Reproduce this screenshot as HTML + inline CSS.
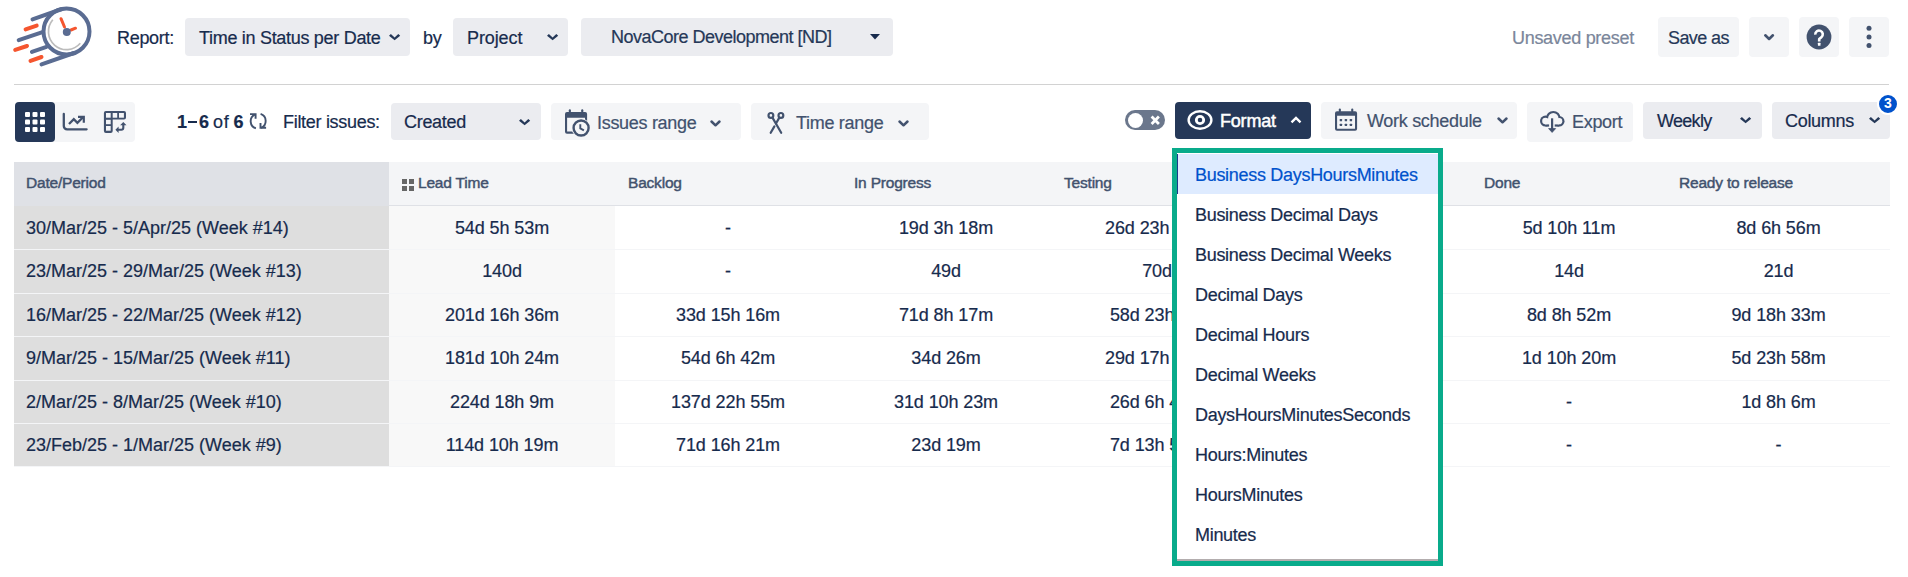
<!DOCTYPE html>
<html><head><meta charset="utf-8">
<style>
*{box-sizing:border-box;margin:0;padding:0}
html,body{width:1908px;height:577px;overflow:hidden;background:#fff}
body{font-family:"Liberation Sans",sans-serif;color:#253858;position:relative}
.a{position:absolute}
.t{position:absolute;white-space:nowrap;font-size:18px;letter-spacing:-0.3px;line-height:20px;-webkit-text-stroke:0.2px currentColor}
.btn{position:absolute;border-radius:4px;background:#f4f5f7}
.dd{position:absolute;border-radius:4px;background:#ebecf0}
svg{position:absolute;overflow:visible}
.hd{position:absolute;top:162px;height:43px;background:#f4f5f7}
.ht{position:absolute;top:174.6px;font-size:15.5px;letter-spacing:-0.2px;font-weight:normal;-webkit-text-stroke:0.45px #42526e;color:#42526e;line-height:16px;white-space:nowrap}
.c{position:absolute;text-align:center;font-size:18px;letter-spacing:-0.1px;line-height:20px;color:#172b4d;white-space:nowrap;-webkit-text-stroke:0.2px currentColor}
.mi{position:absolute;left:1195px;font-size:18px;letter-spacing:-0.3px;line-height:20px;color:#172b4d;white-space:nowrap;-webkit-text-stroke:0.2px currentColor}
</style></head>
<body>
<!-- logo -->
<svg width="100" height="80" style="left:0;top:0" viewBox="0 0 100 80">
  <g stroke="#5a6c92" stroke-width="4" stroke-linecap="round" fill="none">
    <circle cx="66.5" cy="31.5" r="23"/>
    <line x1="32.5" y1="19.4" x2="62" y2="9"/>
    <line x1="41.5" y1="64.4" x2="74" y2="53"/>
    <line x1="18.7" y1="40.2" x2="42.5" y2="32.1"/>
    <line x1="31.9" y1="51.9" x2="46.5" y2="46.8"/>
  </g>
  <g stroke="#f5562f" stroke-width="4" stroke-linecap="round" fill="none">
    <line x1="25.6" y1="29.4" x2="36.7" y2="25.6"/>
    <line x1="15.2" y1="49.9" x2="27" y2="46"/>
    <line x1="30.5" y1="60.9" x2="41.5" y2="57"/>
    <line x1="61" y1="18.7" x2="64.5" y2="27" stroke-width="3"/>
    <line x1="71" y1="30" x2="75.5" y2="28.2" stroke-width="3"/>
  </g>
  <path d="M52.8 19.8 A17.9 17.9 0 1 0 80.3 43.3" stroke="#bcbcbc" stroke-width="1.7" fill="none"/>
  <circle cx="66.8" cy="32" r="4" fill="#5a6c92"/>
</svg>

<div class="t" style="left:117px;top:28px;color:#172b4d">Report:</div>
<div class="dd" style="left:185px;top:18px;width:225px;height:38px"></div>
<div class="t" style="left:199px;top:28px;color:#172b4d">Time in Status per Date</div>
<svg style="left:388.9px;top:33.8px" width="12" height="7" viewBox="0 0 12 7"><path d="M0 1.8 L1.9 0 L5.6 3.4 L9.3 0 L11.2 1.8 L5.6 6.2 Z" fill="#253858"/></svg>
<div class="t" style="left:423px;top:28px;color:#172b4d">by</div>
<div class="dd" style="left:453px;top:18px;width:115px;height:38px"></div>
<div class="t" style="left:467px;top:28px;letter-spacing:-0.1px;color:#172b4d">Project</div>
<svg style="left:546.9px;top:33.8px" width="12" height="7" viewBox="0 0 12 7"><path d="M0 1.8 L1.9 0 L5.6 3.4 L9.3 0 L11.2 1.8 L5.6 6.2 Z" fill="#253858"/></svg>
<div class="dd" style="left:581px;top:18px;width:312px;height:38px"></div>
<div class="t" style="left:611px;top:27px;letter-spacing:-0.5px">NovaCore Development [ND]</div>
<svg style="left:870px;top:34px" width="10" height="6"><path d="M0 0 L10 0 L5 5.5 Z" fill="#172b4d"/></svg>

<div class="t" style="left:1512px;top:28px;color:#7a869a">Unsaved preset</div>
<div class="btn" style="left:1658px;top:17px;width:81px;height:40px"></div>
<div class="t" style="left:1668px;top:28px;color:#253858;letter-spacing:-0.6px">Save as</div>
<div class="btn" style="left:1749px;top:17px;width:40px;height:40px"></div>
<svg style="left:1764px;top:34px" width="11" height="7"><path d="M1.3 1.3 L5.1 5 L8.9 1.3" stroke="#42526e" stroke-width="2.6" stroke-linecap="round" stroke-linejoin="round" fill="none"/></svg>
<div class="btn" style="left:1799px;top:17px;width:40px;height:40px"></div>
<svg style="left:1806px;top:24px" width="26" height="26" viewBox="0 0 26 26"><circle cx="13" cy="13" r="12.4" fill="#42526e"/><path d="M9.3 10.6 A3.75 3.75 0 1 1 15.36 13.22 L13.2 15 V17.6" stroke="#fff" stroke-width="2.6" fill="none" stroke-linejoin="round"/><rect x="11.9" y="18.8" width="2.6" height="2.9" rx="0.5" fill="#fff"/></svg>
<div class="btn" style="left:1849px;top:17px;width:40px;height:40px"></div>
<svg style="left:1864px;top:25px" width="10" height="24"><circle cx="5" cy="3.3" r="2.5" fill="#42526e"/><circle cx="5" cy="12" r="2.5" fill="#42526e"/><circle cx="5" cy="20.6" r="2.5" fill="#42526e"/></svg>

<div class="a" style="left:14px;top:84px;width:1875px;height:1px;background:#d2d2d2"></div>

<!-- second row -->
<div class="btn" style="left:15px;top:102px;width:120px;height:40px"></div>
<div class="a" style="left:15px;top:102px;width:40px;height:40px;border-radius:4px;background:#253858"></div>
<svg style="left:25px;top:112px" width="20" height="20"><g fill="#fff">
<rect x="0" y="0" width="5" height="5" rx="1"/><rect x="7.5" y="0" width="5" height="5" rx="1"/><rect x="15" y="0" width="5" height="5" rx="1"/>
<rect x="0" y="7.5" width="5" height="5" rx="1"/><rect x="7.5" y="7.5" width="5" height="5" rx="1"/><rect x="15" y="7.5" width="5" height="5" rx="1"/>
<rect x="0" y="15" width="5" height="5" rx="1"/><rect x="7.5" y="15" width="5" height="5" rx="1"/><rect x="15" y="15" width="5" height="5" rx="1"/></g></svg>
<svg style="left:60px;top:106px" width="30" height="30" viewBox="0 0 30 30"><g stroke="#42526e" fill="none"><path d="M3.8 8 V20 A3.3 3.3 0 0 0 7.1 23.3 H26.6" stroke-width="2.3" stroke-linecap="round"/><path d="M9 18 L13.8 13.2 L17.4 16.8 L23 11.2" stroke-width="2.3"/><path d="M18 10.8 H23.8 V16.8" stroke-width="2.2"/></g></svg>
<svg style="left:100px;top:106px" width="30" height="30" viewBox="0 0 30 30"><path d="M5.9 4.9 H24 A2 2 0 0 1 26 6.9 V11.5 A2 2 0 0 1 24 13.5 H12.7 V25 A2 2 0 0 1 10.7 27 H5.9 A2 2 0 0 1 3.9 25 V6.9 A2 2 0 0 1 5.9 4.9 Z" fill="#42526e"/><g fill="#f4f5f7"><rect x="6" y="7" width="4.7" height="4.7"/><rect x="12.7" y="7" width="4.5" height="4.7"/><rect x="19" y="7" width="4.9" height="4.7"/><rect x="6" y="13.8" width="4.7" height="4.4"/><rect x="6" y="20" width="4.7" height="4.7"/></g><path d="M17.5 23.8 H21.3 A2 2 0 0 0 23.3 21.8 V18.5" stroke="#42526e" stroke-width="2.1" fill="none"/><path d="M15.4 23.8 L18.6 20.6 L18.6 27 Z M23.3 16.1 L20.1 19.3 L26.5 19.3 Z" fill="#42526e"/></svg>

<div class="t" style="left:177px;top:112px;color:#172b4d;font-weight:bold">1</div><div class="a" style="left:188px;top:121px;width:9px;height:1.6px;background:#172b4d"></div><div class="t" style="left:199px;top:112px;color:#172b4d;font-weight:bold">6</div><div class="t" style="left:213px;top:112px;color:#172b4d;letter-spacing:0.8px">of</div><div class="t" style="left:233.5px;top:112px;color:#172b4d;font-weight:bold">6</div>
<svg style="left:244px;top:108px" width="28" height="26" viewBox="0 0 28 26"><g stroke="#42526e" stroke-width="1.9" fill="none"><path d="M10.8 6.6 A7.4 7.4 0 0 0 11.9 20.3"/><path d="M6 6.1 H11.6 V10.8"/><path d="M16.6 5.9 A7.4 7.4 0 0 1 17 19.8"/><path d="M22.1 19.8 H16.5 V15.1"/></g></svg>
<div class="t" style="left:283px;top:112px;color:#172b4d">Filter issues:</div>
<div class="dd" style="left:391px;top:103px;width:150px;height:37px"></div>
<div class="t" style="left:404px;top:112px;color:#172b4d">Created</div>
<svg style="left:519.2px;top:118.8px" width="12" height="7" viewBox="0 0 12 7"><path d="M0 1.8 L1.9 0 L5.6 3.4 L9.3 0 L11.2 1.8 L5.6 6.2 Z" fill="#253858"/></svg>

<div class="btn" style="left:551px;top:103px;width:190px;height:37px"></div>
<svg style="left:560px;top:106px" width="34" height="34" viewBox="0 0 34 34"><g fill="#42526e"><rect x="8.8" y="3.2" width="2.1" height="3.6" rx="1"/><rect x="21.2" y="3.2" width="2.1" height="3.6" rx="1"/><path fill-rule="evenodd" d="M7 5.9 H25.1 A2 2 0 0 1 27.1 7.9 V25.7 A2 2 0 0 1 25.1 27.7 H7 A2 2 0 0 1 5 25.7 V7.9 A2 2 0 0 1 7 5.9 Z M7.1 11.8 V25.6 H25 V11.8 Z"/></g><circle cx="21.1" cy="22" r="9.4" fill="#f4f5f7"/><circle cx="21.1" cy="22" r="7.5" fill="#f4f5f7" stroke="#42526e" stroke-width="2.4"/><path d="M20.3 18.3 V22.4 L23.9 24.4" stroke="#42526e" stroke-width="1.9" fill="none"/></svg>
<div class="t" style="left:597px;top:113px;color:#42526e">Issues range</div>
<svg style="left:710px;top:120px" width="12" height="8"><path d="M1.5 1.5 L5.5 5.3 L9.5 1.5" stroke="#42526e" stroke-width="2.5" stroke-linecap="round" stroke-linejoin="round" fill="none"/></svg>

<div class="btn" style="left:751px;top:103px;width:178px;height:37px"></div>
<svg style="left:760px;top:106px" width="34" height="34" viewBox="0 0 34 34"><g stroke="#42526e" stroke-width="2.2" fill="none" stroke-linecap="round"><circle cx="10.9" cy="9.4" r="2.4"/><circle cx="20.9" cy="9.4" r="2.4"/><path d="M12.6 11.9 L21.2 26.8"/><path d="M19.2 11.9 L16.1 17.3"/><path d="M14.4 20.4 L10.7 26.8"/></g></svg>
<div class="t" style="left:796px;top:113px;color:#42526e">Time range</div>
<svg style="left:898px;top:120px" width="12" height="8"><path d="M1.5 1.5 L5.5 5.3 L9.5 1.5" stroke="#42526e" stroke-width="2.5" stroke-linecap="round" stroke-linejoin="round" fill="none"/></svg>

<!-- toggle -->
<div class="a" style="left:1125px;top:110px;width:40px;height:20px;border-radius:10px;background:#6b778c"></div>
<div class="a" style="left:1128px;top:112.5px;width:15px;height:15px;border-radius:50%;background:#fff"></div>
<svg style="left:1149.5px;top:114.5px" width="11" height="11"><path d="M1.6 1.6 L8.9 8.9 M8.9 1.6 L1.6 8.9" stroke="#fff" stroke-width="2.8"/></svg>

<div class="a" style="left:1175px;top:102px;width:136px;height:37px;border-radius:4px;background:#253858"></div>
<svg style="left:1183px;top:103px" width="34" height="34" viewBox="0 0 34 34"><ellipse cx="17" cy="17" rx="11.4" ry="8.7" stroke="#fff" stroke-width="2.4" fill="none"/><circle cx="17" cy="17" r="3.7" stroke="#fff" stroke-width="2.8" fill="none"/></svg>
<div class="t" style="left:1220px;top:111px;color:#fff;font-size:18px;letter-spacing:-0.2px;-webkit-text-stroke:0.5px #fff">Format</div>
<svg style="left:1290px;top:116px" width="12" height="8"><path d="M1.5 6.3 L6 2 L10.5 6.3" stroke="#fff" stroke-width="2.4" fill="none"/></svg>

<div class="btn" style="left:1321px;top:102px;width:196px;height:37px"></div>
<svg style="left:1330px;top:103px" width="34" height="34" viewBox="0 0 34 34"><g fill="#42526e"><rect x="8.8" y="5.4" width="2.1" height="3.8" rx="1"/><rect x="21.2" y="5.4" width="2.1" height="3.8" rx="1"/><path fill-rule="evenodd" d="M7 8.2 H25.1 A2 2 0 0 1 27.1 10.2 V25.7 A2 2 0 0 1 25.1 27.7 H7 A2 2 0 0 1 5 25.7 V10.2 A2 2 0 0 1 7 8.2 Z M7.1 12.7 V25.8 H25 V12.7 Z"/><rect x="9.7" y="15.9" width="2.4" height="2.4" rx="0.5"/><rect x="14.7" y="15.9" width="2.4" height="2.4" rx="0.5"/><rect x="19.7" y="15.9" width="2.4" height="2.4" rx="0.5"/><rect x="9.7" y="20.7" width="2.4" height="2.4" rx="0.5"/><rect x="14.7" y="20.7" width="2.4" height="2.4" rx="0.5"/><rect x="19.7" y="20.7" width="2.4" height="2.4" rx="0.5"/></g></svg>
<div class="t" style="left:1367px;top:111px;color:#42526e">Work schedule</div>
<svg style="left:1496.5px;top:117px" width="12" height="8"><path d="M1.5 1.5 L5.5 5.3 L9.5 1.5" stroke="#42526e" stroke-width="2.5" stroke-linecap="round" stroke-linejoin="round" fill="none"/></svg>

<div class="btn" style="left:1527px;top:102px;width:106px;height:40px"></div>
<svg style="left:1535px;top:105px" width="34" height="34" viewBox="0 0 34 34"><g fill="#42526e"><circle cx="10.5" cy="16.1" r="5.5"/><circle cx="18.3" cy="13.3" r="7.4"/><circle cx="24.2" cy="16.2" r="5.3"/><rect x="10.5" y="15" width="13.7" height="6.6"/></g><g fill="#f4f5f7"><circle cx="10.5" cy="16.1" r="3.3"/><circle cx="18.3" cy="13.3" r="5.2"/><circle cx="24.2" cy="16.2" r="3.1"/><rect x="10.5" y="14" width="13.7" height="5.4"/><rect x="14.1" y="18" width="5.6" height="4.5"/></g><path d="M17.1 13.3 V24" stroke="#42526e" stroke-width="2.2"/><path d="M13.6 23.6 H20.6 L17.1 27.4 Z" fill="#42526e" stroke="#42526e" stroke-width="0.8" stroke-linejoin="round"/></svg>
<div class="t" style="left:1572px;top:112px;color:#42526e">Export</div>

<div class="dd" style="left:1643px;top:102px;width:119px;height:37px"></div>
<div class="t" style="left:1657px;top:111px;letter-spacing:-0.7px;color:#172b4d">Weekly</div>
<svg style="left:1740px;top:116.8px" width="12" height="7" viewBox="0 0 12 7"><path d="M0 1.8 L1.9 0 L5.6 3.4 L9.3 0 L11.2 1.8 L5.6 6.2 Z" fill="#253858"/></svg>

<div class="dd" style="left:1772px;top:102px;width:118px;height:37px"></div>
<div class="t" style="left:1785px;top:111px;color:#172b4d">Columns</div>
<svg style="left:1869px;top:116.9px" width="12" height="7" viewBox="0 0 12 7"><path d="M0 1.8 L1.9 0 L5.6 3.4 L9.3 0 L11.2 1.8 L5.6 6.2 Z" fill="#253858"/></svg>
<div class="a" style="left:1876.6px;top:92.8px;width:22.5px;height:22.5px;border-radius:50%;background:#0052cc;border:2px solid #fff;color:#fff;font-size:14px;font-weight:bold;text-align:center;line-height:17.5px">3</div>

<!-- table header -->
<div class="hd" style="left:14px;width:375px;background:#dfe1e6"></div>
<div class="hd" style="left:389px;width:1501px"></div>
<div class="a" style="left:14px;top:205px;width:1876px;height:1px;background:#dfe1e6"></div>
<div class="ht" style="left:26px">Date/Period</div>
<svg style="left:402px;top:178.6px" width="12" height="12"><g fill="#666"><rect x="0" y="0" width="5" height="5"/><rect x="7" y="0" width="5" height="5"/><rect x="0" y="7" width="5" height="5"/><rect x="7" y="7" width="5" height="5"/></g></svg>
<div class="ht" style="left:418px">Lead Time</div>
<div class="ht" style="left:628px">Backlog</div>
<div class="ht" style="left:854px">In Progress</div>
<div class="ht" style="left:1064px">Testing</div>
<div class="ht" style="left:1484px">Done</div>
<div class="ht" style="left:1679px">Ready to release</div>

<!--ROWS-->
<div class="a" style="left:14px;top:206px;width:375px;height:260px;background:#dedede"></div>
<div class="a" style="left:389px;top:206px;width:226px;height:260px;background:#f8f8f8"></div>
<div class="a" style="left:14px;top:249px;width:1876px;height:1px;background:#f4f5f7"></div>
<div class="a" style="left:14px;top:293px;width:1876px;height:1px;background:#f4f5f7"></div>
<div class="a" style="left:14px;top:336px;width:1876px;height:1px;background:#f4f5f7"></div>
<div class="a" style="left:14px;top:380px;width:1876px;height:1px;background:#f4f5f7"></div>
<div class="a" style="left:14px;top:423px;width:1876px;height:1px;background:#f4f5f7"></div>
<div class="a" style="left:14px;top:466px;width:1876px;height:1px;background:#f4f5f7"></div>
<div class="c" style="left:26px;top:218.0px;text-align:left;letter-spacing:0">30/Mar/25 - 5/Apr/25 (Week #14)</div>
<div class="c" style="left:389px;top:218.0px;width:226px">54d 5h 53m</div>
<div class="c" style="left:615px;top:218.0px;width:226px">-</div>
<div class="c" style="left:841px;top:218.0px;width:210px">19d 3h 18m</div>
<div class="c" style="left:1051px;top:218.0px;width:212px">26d 23h 41m</div>
<div class="c" style="left:1263px;top:218.0px;width:208px">12d 4h 10m</div>
<div class="c" style="left:1471px;top:218.0px;width:196px">5d 10h 11m</div>
<div class="c" style="left:1667px;top:218.0px;width:223px">8d 6h 56m</div>
<div class="c" style="left:26px;top:261.4px;text-align:left;letter-spacing:0">23/Mar/25 - 29/Mar/25 (Week #13)</div>
<div class="c" style="left:389px;top:261.4px;width:226px">140d</div>
<div class="c" style="left:615px;top:261.4px;width:226px">-</div>
<div class="c" style="left:841px;top:261.4px;width:210px">49d</div>
<div class="c" style="left:1051px;top:261.4px;width:212px">70d</div>
<div class="c" style="left:1263px;top:261.4px;width:208px">28d</div>
<div class="c" style="left:1471px;top:261.4px;width:196px">14d</div>
<div class="c" style="left:1667px;top:261.4px;width:223px">21d</div>
<div class="c" style="left:26px;top:304.8px;text-align:left;letter-spacing:0">16/Mar/25 - 22/Mar/25 (Week #12)</div>
<div class="c" style="left:389px;top:304.8px;width:226px">201d 16h 36m</div>
<div class="c" style="left:615px;top:304.8px;width:226px">33d 15h 16m</div>
<div class="c" style="left:841px;top:304.8px;width:210px">71d 8h 17m</div>
<div class="c" style="left:1051px;top:304.8px;width:212px">58d 23h 7m</div>
<div class="c" style="left:1263px;top:304.8px;width:208px">20d 9h 31m</div>
<div class="c" style="left:1471px;top:304.8px;width:196px">8d 8h 52m</div>
<div class="c" style="left:1667px;top:304.8px;width:223px">9d 18h 33m</div>
<div class="c" style="left:26px;top:348.2px;text-align:left;letter-spacing:0">9/Mar/25 - 15/Mar/25 (Week #11)</div>
<div class="c" style="left:389px;top:348.2px;width:226px">181d 10h 24m</div>
<div class="c" style="left:615px;top:348.2px;width:226px">54d 6h 42m</div>
<div class="c" style="left:841px;top:348.2px;width:210px">34d 26m</div>
<div class="c" style="left:1051px;top:348.2px;width:212px">29d 17h 46m</div>
<div class="c" style="left:1263px;top:348.2px;width:208px">11d 2h 5m</div>
<div class="c" style="left:1471px;top:348.2px;width:196px">1d 10h 20m</div>
<div class="c" style="left:1667px;top:348.2px;width:223px">5d 23h 58m</div>
<div class="c" style="left:26px;top:391.6px;text-align:left;letter-spacing:0">2/Mar/25 - 8/Mar/25 (Week #10)</div>
<div class="c" style="left:389px;top:391.6px;width:226px">224d 18h 9m</div>
<div class="c" style="left:615px;top:391.6px;width:226px">137d 22h 55m</div>
<div class="c" style="left:841px;top:391.6px;width:210px">31d 10h 23m</div>
<div class="c" style="left:1051px;top:391.6px;width:212px">26d 6h 41m</div>
<div class="c" style="left:1263px;top:391.6px;width:208px">14d 5h 2m</div>
<div class="c" style="left:1471px;top:391.6px;width:196px">-</div>
<div class="c" style="left:1667px;top:391.6px;width:223px">1d 8h 6m</div>
<div class="c" style="left:26px;top:435.0px;text-align:left;letter-spacing:0">23/Feb/25 - 1/Mar/25 (Week #9)</div>
<div class="c" style="left:389px;top:435.0px;width:226px">114d 10h 19m</div>
<div class="c" style="left:615px;top:435.0px;width:226px">71d 16h 21m</div>
<div class="c" style="left:841px;top:435.0px;width:210px">23d 19m</div>
<div class="c" style="left:1051px;top:435.0px;width:212px">7d 13h 51m</div>
<div class="c" style="left:1263px;top:435.0px;width:208px">9d 2h 8m</div>
<div class="c" style="left:1471px;top:435.0px;width:196px">-</div>
<div class="c" style="left:1667px;top:435.0px;width:223px">-</div>
<!--/ROWS-->

<!-- dropdown menu -->
<div class="a" style="left:1172px;top:148px;width:271px;height:418px;background:#09ab8b"></div>
<div class="a" style="left:1177px;top:153px;width:261px;height:408px;background:#fff"></div>
<div class="a" style="left:1177px;top:559px;width:261px;height:2px;background:#b3adae"></div>
<div class="a" style="left:1177px;top:154px;width:261px;height:40px;background:#deebff;border-left:1.5px solid #1d3a8a"></div>
<div class="mi" style="top:165px;color:#0052cc">Business DaysHoursMinutes</div>
<div class="mi" style="top:205px">Business Decimal Days</div>
<div class="mi" style="top:245px">Business Decimal Weeks</div>
<div class="mi" style="top:285px">Decimal Days</div>
<div class="mi" style="top:325px">Decimal Hours</div>
<div class="mi" style="top:365px">Decimal Weeks</div>
<div class="mi" style="top:405px">DaysHoursMinutesSeconds</div>
<div class="mi" style="top:445px">Hours:Minutes</div>
<div class="mi" style="top:485px">HoursMinutes</div>
<div class="mi" style="top:525px">Minutes</div>
</body></html>
